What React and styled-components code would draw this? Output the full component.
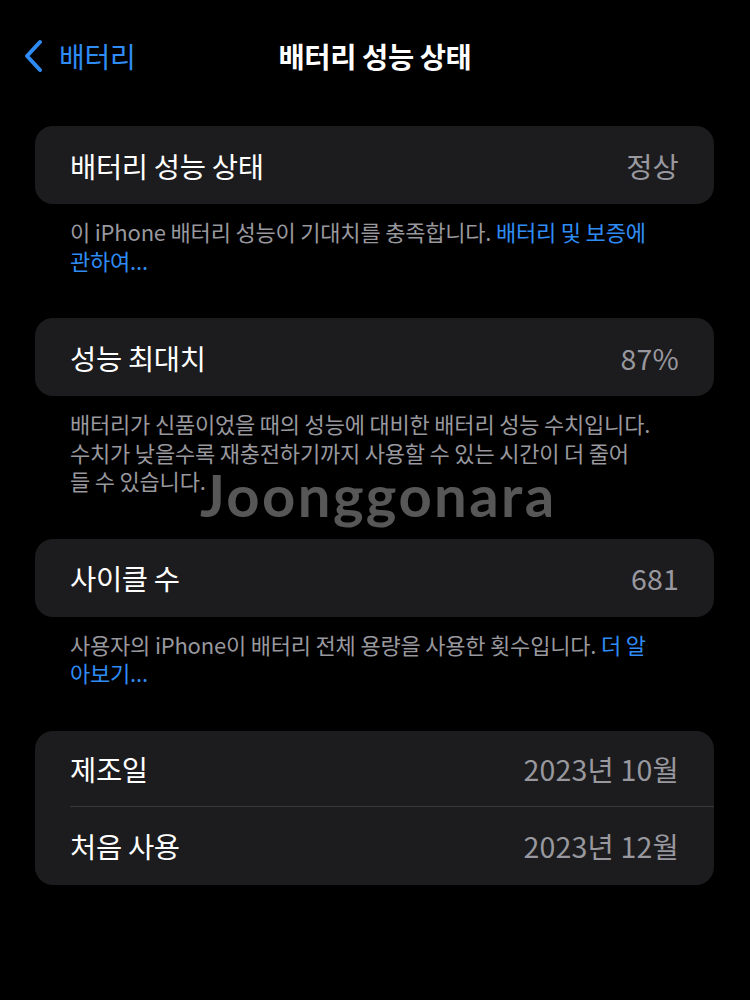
import React from "react";
import styled, { createGlobalStyle } from "styled-components";

const Global = createGlobalStyle`
  html, body { margin: 0; padding: 0; background: #000; }
  body { font-family: "Noto Sans CJK KR", "Noto Sans", sans-serif; -webkit-font-smoothing: antialiased; }
`;

const Page = styled.div`
  position: relative;
  width: 750px;
  height: 1000px;
  background: #000;
  color: #fff;
  overflow: hidden;
`;

const NavBar = styled.div`
  position: relative;
  height: 112px;
  display: flex;
  align-items: flex-start;
  padding-top: 34px;
  box-sizing: border-box;
`;

const Back = styled.div`
  display: flex;
  align-items: center;
  gap: 15px;
  padding-left: 22px;
  color: #2f8cf5;
  font-size: 28px;
  line-height: 44px;
  letter-spacing: -0.3px;
`;

const Title = styled.div`
  position: absolute;
  left: 0;
  right: 0;
  top: 34px;
  text-align: center;
  font-size: 28.5px;
  line-height: 44px;
  font-weight: 700;
  letter-spacing: -0.4px;
  pointer-events: none;
`;

const Content = styled.div`
  padding: 14px 36px 0 35px;
  display: flex;
  flex-direction: column;
`;

const Card = styled.div`
  background: #1c1c1e;
  border-radius: 18px;
  overflow: hidden;
`;

const Row = styled.div`
  height: ${p => p.$h || 78}px;
  display: flex;
  align-items: center;
  justify-content: space-between;
  padding: 0 35px;
  box-sizing: border-box;
  position: relative;
  ${p => p.$divider && `
    &::after {
      content: "";
      position: absolute;
      left: 35px;
      right: 0;
      bottom: 0;
      height: 1px;
      background: #38383a;
    }
  `}
`;

const Label = styled.span`
  font-size: 28.5px;
  color: #fff;
  letter-spacing: -0.3px;
`;

const Value = styled.span`
  font-size: 28.5px;
  color: #98989e;
  letter-spacing: 0.2px;
`;

const Footer = styled.div`
  margin: 13px 0 44px;
  padding: 0 35px;
  display: flex;
  flex-direction: column;
`;

const Line = styled.div`
  height: 28.5px;
  display: flex;
  align-items: center;
  font-size: 22px;
  line-height: 28.5px;
  color: #98989e;
  letter-spacing: -0.2px;
  white-space: pre;
`;

const Link = styled.span`
  color: #2f8cf5;
`;

const Watermark = styled.div`
  position: absolute;
  left: 200px;
  top: 466px;
  font-family: "Lato", sans-serif;
  font-weight: 700;
  font-size: 58px;
  line-height: 1;
  letter-spacing: 2.4px;
  color: #575757;
  pointer-events: none;
`;

const Chevron = () => (
  <svg width="22" height="34" viewBox="0 0 22 34" fill="none">
    <path d="M18 3 L5 17 L18 31" stroke="#2f8cf5" strokeWidth="4" strokeLinecap="round" strokeLinejoin="round" />
  </svg>
);

export default function App() {
  return (
    <Page>
      <Global />
      <NavBar>
        <Back>
          <Chevron />
          <span>배터리</span>
        </Back>
        <Title>배터리 성능 상태</Title>
      </NavBar>
      <Content>
        <Card>
          <Row>
            <Label>배터리 성능 상태</Label>
            <Value>정상</Value>
          </Row>
        </Card>
        <Footer>
          <Line>이 iPhone 배터리 성능이 기대치를 충족합니다. <Link>배터리 및 보증에</Link></Line>
          <Line><Link>관하여...</Link></Line>
        </Footer>

        <Card>
          <Row>
            <Label>성능 최대치</Label>
            <Value>87%</Value>
          </Row>
        </Card>
        <Footer>
          <Line>배터리가 신품이었을 때의 성능에 대비한 배터리 성능 수치입니다.</Line>
          <Line>수치가 낮을수록 재충전하기까지 사용할 수 있는 시간이 더 줄어</Line>
          <Line>들 수 있습니다.</Line>
        </Footer>

        <Card>
          <Row>
            <Label>사이클 수</Label>
            <Value>681</Value>
          </Row>
        </Card>
        <Footer>
          <Line>사용자의 iPhone이 배터리 전체 용량을 사용한 횟수입니다. <Link>더 알</Link></Line>
          <Line><Link>아보기...</Link></Line>
        </Footer>

        <Card>
          <Row $h={76} $divider>
            <Label>제조일</Label>
            <Value>2023년 10월</Value>
          </Row>
          <Row $h={78}>
            <Label>처음 사용</Label>
            <Value>2023년 12월</Value>
          </Row>
        </Card>
      </Content>
      <Watermark>Joonggonara</Watermark>
    </Page>
  );
}
